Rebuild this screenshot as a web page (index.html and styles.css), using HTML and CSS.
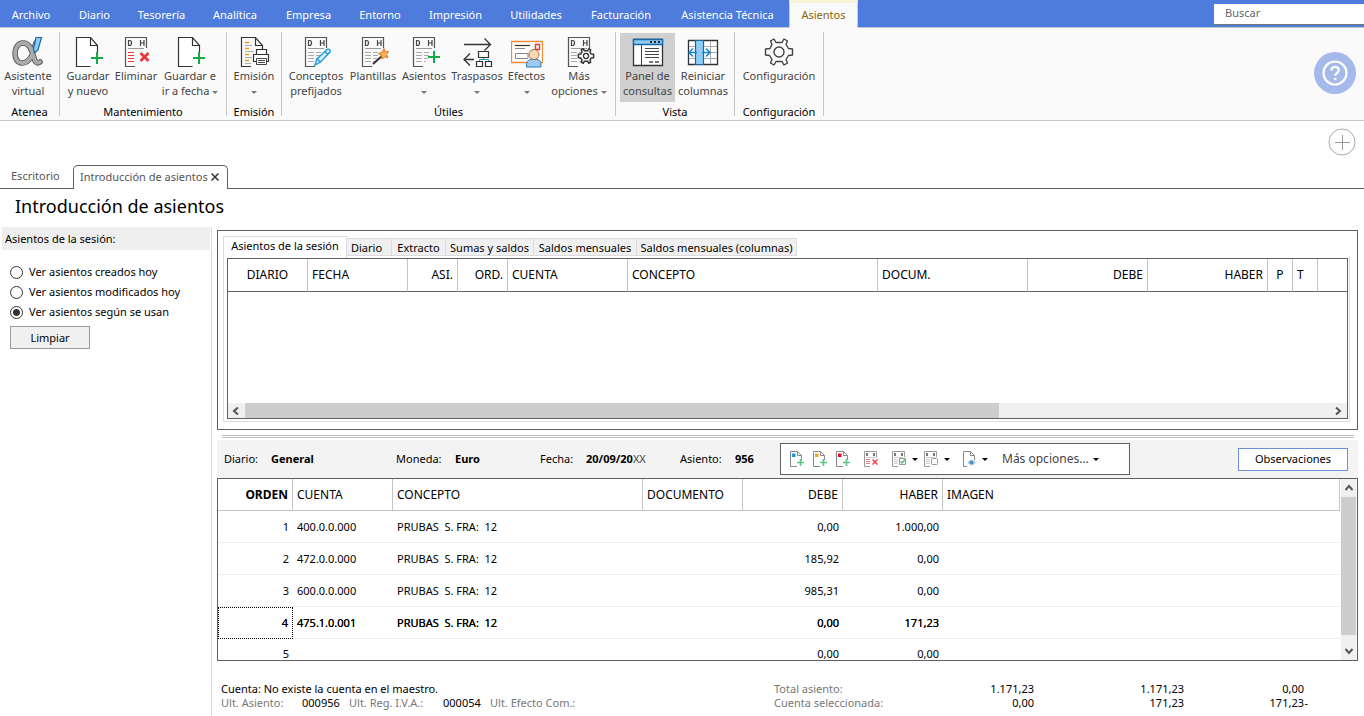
FILE: index.html
```html
<!DOCTYPE html>
<html lang="es">
<head>
<meta charset="utf-8">
<title>Introducción de asientos</title>
<link rel="stylesheet" href="styles.css">
</head>
<body>
<svg class="defs" aria-hidden="true">
  <symbol id="newdoc" viewBox="-1 0 32 32">
    <path d="M17.5 30.500H3.500V1.500H17.500L24.500 9.500V18" fill="#fff" stroke="#333" stroke-width="1.200"/>
    <path d="M17.500 1.500V9.500H24.500" fill="none" stroke="#333" stroke-width="1.200"/>
    <path d="M24 16V28M18 22H30" stroke="#14a84b" stroke-width="2" fill="none"/>
  </symbol>
  <symbol id="dh" viewBox="0 0 32 32">
    <path d="M15 30.500H5.500V1.500H26.500V12" fill="none" stroke="#555" stroke-width="1.200"/>
    <path d="M8.500 4.500V9.500H9.500Q11.500 9.500 11.500 7T9.500 4.500ZM20.500 4V10M24 4V10M20.500 7H24" fill="none" stroke="#444" stroke-width="1.200"/>
    <path d="M8 12.500H24" stroke="#999"/>
  </symbol>
  <symbol id="dhlines" viewBox="0 0 32 32">
    <path d="M8 16.500H14M8 19.500H14M8 22.500H14M8 25.500H14M16 16.500H21M16 19.500H21M16 22.500H20M16 25.500H18" stroke="#aaa"/>
  </symbol>
  <symbol id="cog" viewBox="-16 -16 32 32">
    <path d="M-3 -9.500L-5 -13 -8.500 -11 -7 -7.500-9 -3.500-13.500-3V3L-9.500 3.500-7 7.500-8.500 11-5 13-3 9.500H3L5 13 8.500 11 7 7.500 9.500 3.500 13.500 3V-3L9.500-3.500 7-7.500 8.500-11 5-13 3-9.500Z" fill="#fafafa" stroke="#444" stroke-width="1.400" stroke-linejoin="round"/>
    <circle r="5" fill="#fafafa" stroke="#444" stroke-width="1.400"/>
  </symbol>
  <symbol id="smallcog" viewBox="-16 -16 32 32">
    <path d="M-3 -9.500L-5 -13 -8.500 -11 -7 -7.500-9 -3.500-13.500-3V3L-9.500 3.500-7 7.500-8.500 11-5 13-3 9.500H3L5 13 8.500 11 7 7.500 9.500 3.500 13.500 3V-3L9.500-3.500 7-7.500 8.500-11 5-13 3-9.500Z" fill="#fafafa" stroke="#333" stroke-width="2.600" stroke-linejoin="round"/>
    <circle r="4.500" fill="#fafafa" stroke="#333" stroke-width="2.200"/>
  </symbol>
  <symbol id="minidoc" viewBox="0 0 16 16">
    <path d="M8 15.500H1.500V.5H8.500L12.500 4.500V9M8.500 .5V4.500H12.500" fill="none" stroke="#888"/>
    <path d="M11.500 8V15M8 11.500H15" stroke="#5cc487" stroke-width="1.600"/>
  </symbol>
  <symbol id="minidh" viewBox="0 0 16 16">
    <path d="M6 15.500H.5V.5H12.500V6" fill="none" stroke="#999"/>
    <path d="M3 2V5M10 2V5" stroke="#777" stroke-width="2"/>
    <path d="M2 6.500H11" stroke="#ccc"/>
  </symbol>
</svg>

<nav class="menu">
  <a href="#">Archivo</a><a href="#">Diario</a><a href="#">Tesorería</a><a href="#">Analítica</a><a href="#">Empresa</a><a href="#">Entorno</a><a href="#">Impresión</a><a href="#">Utilidades</a><a href="#">Facturación</a><a href="#">Asistencia Técnica</a><a href="#" class="current">Asientos</a>
  <input class="search" type="text" placeholder="Buscar" aria-label="Buscar">
</nav>

<div class="ribbon">
  <section class="group g-atenea">
    <div class="tools">
      <button class="tool">
        <svg class="ico" viewBox="0 0 32 32"><path d="M24 7C21 16 19 27 10 27 5 27 3 22 3 17S6 7 11 7C18 7 20 15 22 22 23 26 25 28 28 26" fill="none" stroke="#555" stroke-width="5.600" stroke-linecap="round"/><path d="M24 7C21 16 19 27 10 27 5 27 3 22 3 17S6 7 11 7C18 7 20 15 22 22 23 26 25 28 28 26" fill="none" stroke="#aaa" stroke-width="3.800" stroke-linecap="round"/><path d="M24 1.500H29.500L26 14 22.500 17 21.500 13Z" fill="#8fcbf5" stroke="#1468a8" stroke-width="1.200"/></svg>
        <span>Asistente<br>virtual</span></button>
    </div>
    <h2>Atenea</h2>
  </section>
  <section class="group g-mant">
    <div class="tools">
      <button class="tool"><svg class="ico"><use href="#newdoc"/></svg><span>Guardar<br>y nuevo</span></button>
      <button class="tool"><svg class="ico" viewBox="0 0 32 32"><use href="#dh"/><path d="M8 16.500H14M8 19.500H14M8 22.500H14M8 25.500H14" stroke="#ee3338" stroke-width="1.200"/><path d="M20.500 17L28.500 25M28.500 17L20.500 25" stroke="#ee3338" stroke-width="2.600"/></svg><span>Eliminar</span></button>
      <button class="tool"><svg class="ico"><use href="#newdoc"/></svg><span>Guardar e<br>ir a fecha <i class="caret"></i></span></button>
    </div>
    <h2>Mantenimiento</h2>
  </section>
  <section class="group g-emi">
    <div class="tools">
      <button class="tool"><svg class="ico" viewBox="0 0 32 32"><path d="M13 30.500H3.500V1.500H17.500L24.500 9.500V13M17.500 1.500V9.500H24.500" fill="none" stroke="#333" stroke-width="1.200"/><path d="M7 6.500H11M7 12.500H11M7 18.500H11M7 24.500H11" stroke="#f39a1c" stroke-width="1.400"/><path d="M7 9.500H14M7 15.500H16M7 21.500H14M7 27.500H13" stroke="#aaa"/><path d="M18.500 18V13.500H28.500V18M18.500 25.500H15.500V18.500H30.500V25.500H28.500" fill="#fff" stroke="#333" stroke-width="1.200"/><path d="M18.500 22.500H28.500V28.500H18.500ZM20 24.500H27M20 26.500H27" fill="#fff" stroke="#444"/></svg><span>Emisión<br><i class="caret"></i></span></button>
    </div>
    <h2>Emisión</h2>
  </section>
  <section class="group g-util">
    <div class="tools">
      <button class="tool"><svg class="ico" viewBox="0 0 32 32"><use href="#dh"/><use href="#dhlines"/><path d="M15 29L17 23 27 13.500C29 12.500 31 14 30 16L20.500 26ZM17 23L20.500 26M25 15.500L28 18.500" fill="#d9effb" stroke="#1d9bdc" stroke-width="1.400"/></svg><span>Conceptos<br>prefijados</span></button>
      <button class="tool"><svg class="ico" viewBox="0 0 32 32"><use href="#dh"/><use href="#dhlines"/><path d="M16 28L25 20" stroke="#333" stroke-width="2"/><path d="M27 12.500L28 16 31.500 15.500 29.500 18.500 31 21.500 27.500 21 25 23 24.500 19.500 21.500 17.500 25 16.500Z" fill="#f9b24a" stroke="#e2762a"/></svg><span>Plantillas</span></button>
      <button class="tool"><svg class="ico" viewBox="0 0 32 32"><use href="#dh"/><use href="#dhlines"/><path d="M26 15V27M20 21H32" stroke="#14a84b" stroke-width="2"/></svg><span>Asientos<br><i class="caret"></i></span></button>
      <button class="tool"><svg class="ico" viewBox="0 0 32 32"><path d="M3 8.500H29M23.500 2.500L29.500 8.500 23.500 14.500M13 23.500H3M9 17.500L3 23.500 9 29.500" fill="none" stroke="#333" stroke-width="1.300"/><path d="M17.500 15.500H27.500V21.500H17.500ZM15.500 25.500H21.500V30.500H15.500ZM24.500 25.500H30.500V30.500H24.500Z" fill="#fafafa" stroke="#333" stroke-width="1.200"/><path d="M22.500 22V23.500M18.500 25V23.500H27.500V25" fill="none" stroke="#1d9bdc"/></svg><span>Traspasos<br><i class="caret"></i></span></button>
      <button class="tool"><svg class="ico" viewBox="0 0 32 32"><path d="M.5 5.500H31.500V26.500H.5Z" fill="#fff" stroke="#ee8a3a" stroke-width="1.300"/><path d="M4 9.500H19" stroke="#333" stroke-width="1.200"/><path d="M4 12.500H14" stroke="#888"/><path d="M4.500 17.500H17V22.500H4.500Z" fill="none" stroke="#888"/><path d="M24.500 8.500H28.500V13.500H24.500Z" fill="#fff" stroke="#e33" stroke-width="1.400"/><path d="M15.500 31V28Q16 23 23 23T30 28V31Z" fill="#9fcaf0" stroke="#2f7fbf"/><circle cx="23" cy="18.500" r="5" fill="#f9d8b4" stroke="#9a6a4a"/></svg><span>Efectos<br><i class="caret"></i></span></button>
      <button class="tool"><svg class="ico" viewBox="0 0 32 32"><use href="#dh"/><use href="#dhlines"/><use href="#smallcog" x="14" y="11" width="18" height="18"/></svg><span>Más<br>opciones <i class="caret"></i></span></button>
    </div>
    <h2>Útiles</h2>
  </section>
  <section class="group g-vista">
    <div class="tools">
      <button class="tool pressed"><svg class="ico" viewBox="0 0 32 32"><path d="M1.500 3.500H30.500V29.500H1.500Z" fill="#fff" stroke="#333" stroke-width="1.300"/><path d="M1.500 3.500H30.500V8.500H1.500Z" fill="#8fcbf5" stroke="#1468a8" stroke-width="1.300"/><path d="M18 6H20M22 6H24M26 6H28" stroke="#222" stroke-width="2"/><path d="M9.500 9V29M13 12.500H27M13 15.500H27M13 18.500H27M13 21.500H27" stroke="#444"/><path d="M17 26H21M23 26H27" stroke="#777" stroke-width="2"/></svg><span>Panel de<br>consultas</span></button>
      <button class="tool"><svg class="ico" viewBox="0 0 32 32"><path d="M1.500 4.500H30.500V28.500H1.500Z" fill="#fff" stroke="#333" stroke-width="1.300"/><path d="M2 10.500H30M2 16.500H30M2 22.500H30M23.500 5V28" stroke="#aaa"/><path d="M8.500 4.500H16.500V28.500H8.500Z" fill="#8fcbf5" stroke="#1468a8" stroke-width="1.200"/><path d="M10 16.500H2.500M6 12.500L2 16.500 6 20.500M15 16.500H22.500M19 12.500L23 16.500 19 20.500" fill="none" stroke="#1487cc" stroke-width="1.500"/></svg><span>Reiniciar<br>columnas</span></button>
    </div>
    <h2>Vista</h2>
  </section>
  <section class="group g-conf">
    <div class="tools">
      <button class="tool"><svg class="ico"><use href="#cog"/></svg><span>Configuración</span></button>
    </div>
    <h2>Configuración</h2>
  </section>
  <button class="help" aria-label="Ayuda"><svg viewBox="0 0 42 42"><circle cx="21" cy="21" r="21" fill="#a5baeb"/><circle cx="21" cy="21" r="11.500" fill="none" stroke="#fff" stroke-width="2.200"/><path d="M17.500 18.500C17.500 13.500 24.800 13.800 24.800 18 24.800 20.800 21.200 20.800 21.200 23.800" fill="none" stroke="#fff" stroke-width="2.200"/><circle cx="21.200" cy="27" r="1.300" fill="#fff"/></svg></button>
</div>

<div class="docbar">
  <button class="add" aria-label="Añadir"><svg viewBox="0 0 28 28"><circle cx="14" cy="14" r="13" fill="none" stroke="#aaa"/><path d="M14.500 7V22M7 14.500H22" stroke="#999"/></svg></button>
  <div class="doctabs">
    <a href="#" class="doctab">Escritorio</a>
    <span class="doctab open"><a href="#">Introducción de asientos</a><button class="close" aria-label="Cerrar"><svg viewBox="0 0 8 8"><path d="M.5 .5L7.500 7.500M7.500 .5L.5 7.500" stroke="#333" stroke-width="1.500"/></svg></button></span>
    <span class="rule"></span>
  </div>
</div>

<h1>Introducción de asientos</h1>

<div class="body">
  <aside class="side">
    <h3>Asientos de la sesión:</h3>
    <div class="choices">
      <label><input type="radio" name="ver">Ver asientos creados hoy</label>
      <label><input type="radio" name="ver">Ver asientos modificados hoy</label>
      <label><input type="radio" name="ver" checked>Ver asientos según se usan</label>
      <button class="clear">Limpiar</button>
    </div>
  </aside>

  <main class="work">
    <section class="query">
      <div class="qtabs">
        <button class="active">Asientos de la sesión</button><button class="near">Diario</button><button>Extracto</button><button>Sumas y saldos</button><button>Saldos mensuales</button><button>Saldos mensuales (columnas)</button>
      </div>
      <div class="qframe">
        <div class="qgrid">
          <table class="grid">
            <colgroup><col class="w80"><col class="w100"><col class="w50"><col class="w50"><col class="w120"><col class="w250"><col class="w150"><col class="w120"><col class="w120"><col class="w25"><col class="w25"><col></colgroup>
            <thead><tr><th class="mid">DIARIO</th><th>FECHA</th><th class="num">ASI.</th><th class="num">ORD.</th><th>CUENTA</th><th>CONCEPTO</th><th>DOCUM.</th><th class="num">DEBE</th><th class="num">HABER</th><th class="mid">P</th><th>T</th><th></th></tr></thead>
          </table>
          <div class="hscroll"><svg viewBox="0 0 8 8"><path d="M6 .5L2 4 6 7.500" fill="none" stroke="#555" stroke-width="2"/></svg><i class="track"><i class="thumb"></i></i><svg viewBox="0 0 8 8"><path d="M2 .5L6 4 2 7.500" fill="none" stroke="#555" stroke-width="2"/></svg></div>
        </div>
      </div>
    </section>

    <div class="splitter"></div>

    <section class="entry">
      <dl class="facts">
        <dt>Diario:</dt><dd>General</dd>
        <dt>Moneda:</dt><dd>Euro</dd>
        <dt>Fecha:</dt><dd>20/09/20<span>XX</span></dd>
        <dt>Asiento:</dt><dd>956</dd>
      </dl>
      <div class="minibar">
        <button aria-label="Nuevo"><svg viewBox="0 0 16 16"><use href="#minidoc"/><path d="M3 2.500H6.500V6H3Z" fill="#149be0"/></svg></button>
        <button aria-label="Nuevo intermedio"><svg viewBox="0 0 16 16"><use href="#minidoc"/><path d="M3 2.500H6.500V6H3Z" fill="#f5a623"/></svg></button>
        <button aria-label="Nuevo final"><svg viewBox="0 0 16 16"><use href="#minidoc"/><path d="M3 2.500H6.500V6H3Z" fill="#e0102a"/></svg></button>
        <button class="del" aria-label="Eliminar"><svg viewBox="0 0 16 16"><use href="#minidh"/><path d="M2 8.500H6M2 10.500H6M2 12.500H6" stroke="#f08080"/><path d="M8.500 8.500L13.500 13.500M13.500 8.500L8.500 13.500" stroke="#f04545" stroke-width="1.500"/></svg></button>
        <button class="drop" aria-label="Marcar"><svg viewBox="0 0 16 16"><use href="#minidh"/><path d="M2 8.500H6M2 10.500H6M2 12.500H6" stroke="#ccc"/><path d="M7.500 7.500H13.500V13.500H7.500Z" fill="#fff" stroke="#999"/><path d="M8.500 10.500L10 12 13 8.500" fill="none" stroke="#4cbb7a" stroke-width="1.400"/></svg><i class="caret"></i></button>
        <button class="drop" aria-label="Desmarcar"><svg viewBox="0 0 16 16"><use href="#minidh"/><path d="M2 8.500H6M2 10.500H6M2 12.500H6" stroke="#ccc"/><rect x="7.500" y="7.500" width="6" height="6" rx="1" fill="#fff" stroke="#999"/></svg><i class="caret"></i></button>
        <button class="drop view" aria-label="Ver documento"><svg viewBox="0 0 16 16"><path d="M5 15.500H1.500V.5H8.500L12.500 4.500V9M8.500 .5V4.500H12.500" fill="none" stroke="#888"/><path d="M5 11.500Q9.500 6 14 11.500 9.500 17 5 11.500Z" fill="#b4d2ea"/><circle cx="9.500" cy="11.500" r="2" fill="#4e8fc4"/></svg><i class="caret"></i></button>
        <button class="more">Más opciones...<i class="caret"></i></button>
      </div>
      <button class="notes">Observaciones</button>
    </section>

    <section class="lines">
      <div class="linesview">
        <table class="grid rows">
          <colgroup><col class="w75"><col class="w100"><col class="w250"><col class="w100"><col class="w100"><col class="w100"><col></colgroup>
          <thead><tr><th class="num strong">ORDEN</th><th>CUENTA</th><th>CONCEPTO</th><th>DOCUMENTO</th><th class="num">DEBE</th><th class="num">HABER</th><th>IMAGEN</th></tr></thead>
          <tbody>
            <tr><td class="num">1</td><td>400.0.0.000</td><td>PRUBAS  S. FRA:  12</td><td></td><td class="num">0,00</td><td class="num">1.000,00</td><td></td></tr>
            <tr><td class="num">2</td><td>472.0.0.000</td><td>PRUBAS  S. FRA:  12</td><td></td><td class="num">185,92</td><td class="num">0,00</td><td></td></tr>
            <tr><td class="num">3</td><td>600.0.0.000</td><td>PRUBAS  S. FRA:  12</td><td></td><td class="num">985,31</td><td class="num">0,00</td><td></td></tr>
            <tr class="selected"><td class="num focus">4</td><td>475.1.0.001</td><td>PRUBAS  S. FRA:  12</td><td></td><td class="num">0,00</td><td class="num">171,23</td><td></td></tr>
            <tr class="final"><td class="num">5</td><td></td><td></td><td></td><td class="num">0,00</td><td class="num">0,00</td><td></td></tr>
          </tbody>
        </table>
      </div>
      <div class="vscroll"><svg viewBox="0 0 8 8"><path d="M.5 6L4 2 7.500 6" fill="none" stroke="#555" stroke-width="2"/></svg><i class="track"><i class="thumb"></i></i><svg viewBox="0 0 8 8"><path d="M.5 2L4 6 7.500 2" fill="none" stroke="#555" stroke-width="2"/></svg></div>
    </section>

    <footer class="status">
      <div>
        <p>Cuenta: No existe la cuenta en el maestro.</p>
        <p class="last"><span>Ult. Asiento:</span><b>000956</b><span>Ult. Reg. I.V.A.:</span><b>000054</b><span>Ult. Efecto Com.:</span></p>
      </div>
      <table class="totals">
        <tr><th>Total asiento:</th><td>1.171,23</td><td>1.171,23</td><td>0,00</td><td class="sign"></td></tr>
        <tr><th>Cuenta seleccionada:</th><td>0,00</td><td>171,23</td><td>171,23</td><td class="sign">-</td></tr>
      </table>
    </footer>
  </main>
</div>
</body>
</html>
```
FILE: styles.css
```css
* { box-sizing: border-box; }
body {
  margin: 0;
  height: 100vh;
  display: flex;
  flex-direction: column;
  background: #fff;
  color: #000;
  font: 11px/14px "Noto Sans", "Open Sans", sans-serif;
  overflow: hidden;
}
button, input { font: inherit; color: inherit; }
button { padding: 0; border: 0; background: none; }
a { color: inherit; text-decoration: none; }
h1, h2, h3, p, dl, dd { margin: 0; font-weight: 400; }
svg { display: block; flex: none; }
.defs { position: absolute; width: 0; height: 0; }

.menu {
  flex: none;
  display: grid;
  grid-template-columns: 64px 61px 73px 74px 73px 70px 81px 80px 90px 123px 69px 1fr 150px;
  height: 28px;
  background: #4d7cdc;
  border-bottom: 1px solid #c4c8d0;
  color: #fff;
  line-height: 30px;
  text-align: center;
  white-space: nowrap;
}
.menu a:first-child { padding-right: 2px; }
.menu .current {
  height: 28px;
  background: #fafafa;
  border: 1px solid #d0cdc0;
  border-top: 3px solid #fbf3d6;
  border-bottom: 0;
  color: #8a6508;
  line-height: 24px;
}
.search {
  grid-column: 13;
  height: 21px;
  margin-top: 4px;
  padding: 0 11px 3px;
  border: 0;
  border-bottom: 1px solid #777;
  border-radius: 0;
  background: #fff;
  min-width: 0;
}
.search::placeholder { color: #666; opacity: 1; }

.ribbon {
  flex: none;
  display: flex;
  height: 93px;
  background: #fafafa;
  border-bottom: 1px solid #c6c6c6;
}
.group {
  flex: none;
  padding: 5px 1px 0 0;
  background: linear-gradient(#c8c8c8, #c8c8c8) right 4px / 1px 84px no-repeat;
}
.group h2 { margin-top: 3px; font-size: 11px; line-height: 14px; text-align: center; }
.tools { display: grid; height: 69px; }
.g-atenea { width: 60px; }
.g-atenea .tools { grid-template-columns: 56px; }
.g-mant { width: 167px; }
.g-mant .tools { grid-template-columns: 48px 48px 60px; padding-left: 4px; }
.g-emi { width: 55px; }
.g-util { width: 334px; }
.g-util .tools { grid-template-columns: 58px 56px 46px 60px 39px 66px; padding-left: 5px; }
.g-vista { width: 119px; }
.g-vista .tools { grid-template-columns: 55px 54px; column-gap: 1px; padding-left: 4px; }
.g-conf { width: 89px; }
.tool {
  display: flex;
  flex-direction: column;
  align-items: center;
  padding-top: 3px;
  color: #444;
  line-height: 15px;
  white-space: nowrap;
}
.tool.pressed { background: #d0d0d0; }
.ico { width: 32px; height: 32px; }
.caret {
  display: inline-block;
  vertical-align: middle;
  border: 3px solid transparent;
  border-top-color: currentColor;
  border-bottom: 0;
}
.tool .caret { color: #777; }
.help { width: 42px; height: 42px; margin: 24px 8px 0 auto; }

.docbar {
  flex: none;
  display: flex;
  flex-direction: column;
  height: 68px;
  padding-top: 7px;
}
.add { width: 28px; height: 28px; margin: 0 8px 0 auto; }
.doctabs { display: flex; margin-top: 9px; height: 24px; color: #555; line-height: 21px; }
.doctab { width: 73px; padding-left: 11px; border-bottom: 1px solid #606060; white-space: nowrap; }
.doctab.open {
  display: flex;
  justify-content: space-between;
  align-items: flex-start;
  width: 155px;
  padding: 0 8px 0 6px;
  border: 1px solid #606060;
  border-bottom: 0;
  border-radius: 5px 5px 0 0;
}
.close, .close svg { width: 8px; height: 8px; }
.close { margin-top: 7px; }
.rule { flex: 1; border-bottom: 1px solid #606060; }

h1 { flex: none; padding: 5px 15px 8px; font-size: 18px; line-height: 25px; }

.body { flex: 1; min-height: 0; display: flex; }
.side { flex: none; width: 212px; border-right: 1px solid #d8d8d8; }
.side h3 { margin: 0 1px 0 2px; padding-left: 3px; background: #eee; font-size: 11px; line-height: 23px; }
.choices { padding: 12px 10px; display: flex; flex-direction: column; align-items: flex-start; }
.choices label { display: flex; align-items: center; gap: 6px; height: 20px; }
.choices input {
  appearance: none;
  width: 13px;
  height: 13px;
  margin: 0;
  border: 1px solid #333;
  border-radius: 50%;
  background: #fff;
}
.choices input:checked { background: radial-gradient(circle, #333 0 3px, #fff 4px); }
.clear { width: 80px; height: 23px; margin-top: 4px; border: 1px solid #999; background: #f0f0f0; }

.work { flex: 1; min-width: 0; display: flex; flex-direction: column; padding: 3px 6px 0 5px; }
.query {
  flex: none;
  display: flex;
  flex-direction: column;
  height: 200px;
  padding: 5px 7px 7px 5px;
  border: 1px solid #606060;
}
.qtabs {
  display: grid;
  grid-template-columns: 124px 45px 54px 88px 103px 160px;
  align-items: end;
  height: 20px;
}
.qtabs button {
  height: 18px;
  border: 1px solid #dcdcdc;
  border-left: 0;
  background: #f0f0f0;
  line-height: 18px;
  white-space: nowrap;
}
.qtabs .near { padding-left: 4px; text-align: left; }
.qtabs .active {
  height: 22px;
  margin-bottom: -2px;
  padding-bottom: 3px;
  border-left: 1px solid #dcdcdc;
  border-bottom: 0;
  background: #fff;
}
.qframe { flex: 1; display: flex; padding: 2px 1px 2px 3px; border: 1px solid #dcdcdc; border-top: 0; }
.qgrid { flex: 1; min-width: 0; display: flex; flex-direction: column; justify-content: space-between; border: 1px solid #606060; }

.grid { width: 100%; table-layout: fixed; border-collapse: separate; border-spacing: 0; font-size: 12px; line-height: 16px; }
.grid th {
  height: 32px;
  padding: 0 4px;
  border-right: 1px solid #c4c4c4;
  border-bottom: 1px solid #c4c4c4;
  font-weight: 400;
  text-align: left;
}
.qgrid th { height: 33px; border-bottom-color: #606060; }
.qgrid th:last-child { border-right: 0; }
.grid .num { text-align: right; }
.grid .mid { text-align: center; }
.grid .strong { font-weight: 700; }
.w25 { width: 25px; }
.w50 { width: 50px; }
.w75 { width: 75px; }
.w80 { width: 80px; }
.w100 { width: 100px; }
.w120 { width: 120px; }
.w150 { width: 150px; }
.w250 { width: 250px; }
.hscroll { display: flex; align-items: center; height: 15px; background: #f0f0f0; }
.hscroll svg { width: 8px; height: 8px; margin: 0 5px 0 4px; }
.track { flex: 1; display: block; align-self: stretch; }
.thumb { display: block; background: #cdcdcd; }
.hscroll .thumb { width: 69.5%; height: 100%; }

.splitter { flex: none; height: 3px; margin: 5px 4px 2px 5px; border: 1px solid #c0c0c0; border-width: 1px 0; }

.entry { flex: none; display: flex; align-items: center; height: 38px; padding-right: 10px; background: #f3f3f3; }
.facts { display: grid; grid-template-columns: 47px 125px 59px 85px 46px 94px 55px 45px; padding-left: 7px; white-space: nowrap; }
.facts dd { font-weight: 700; }
.facts dd span { font-weight: 400; color: #444; }
.minibar {
  flex: none;
  display: flex;
  align-items: center;
  width: 350px;
  height: 32px;
  padding: 0 8px;
  border: 1px solid #606060;
  background: #fff;
}
.minibar button { display: flex; align-items: center; margin-right: 7px; }
.minibar svg { width: 16px; height: 16px; }
.minibar .del { margin: 0 12px 0 6px; }
.minibar .drop { gap: 4px; margin-right: 6px; }
.minibar .view { gap: 4px; margin: 0 14px 0 6px; }
.minibar .more { gap: 4px; color: #444; font-size: 12px; }
.minibar .caret { color: #000; }
.notes { width: 110px; height: 23px; margin-left: auto; border: 1px solid #6c90dc; background: #fff; }

.lines { flex: 1; min-height: 0; display: flex; border: 1px solid #606060; }
.linesview { flex: 1; min-width: 0; overflow: hidden; }
.rows td { height: 32px; padding: 0 4px; border-bottom: 1px solid #eee; font-size: 11px; white-space: pre; }
.rows .final td { height: 22px; padding-top: 7px; border-bottom: 0; line-height: 14px; }
.rows .selected { text-shadow: 0 0 0 #000; }
.rows .focus { border: 1px dotted #000; }
.vscroll { flex: none; display: flex; flex-direction: column; align-items: center; width: 16px; margin-left: 1px; border-right: 1px solid #f8f8f8; background: #f0f0f0; }
.vscroll svg { width: 8px; height: 8px; margin: 5px 0; }
.vscroll .thumb { height: 100%; }
.vscroll .track { margin-bottom: 7px; }

.status { flex: none; display: flex; justify-content: space-between; margin-top: 21px; padding: 0 50px 6px 4px; white-space: nowrap; }
.last { display: grid; grid-template-columns: 81px 47px 94px 47px auto; color: #777; }
.last b { font-weight: 400; color: #000; }
.totals { border-spacing: 0; line-height: 14px; }
.totals th { width: 120px; padding: 0; color: #777; font-weight: 400; text-align: left; }
.totals td { width: 150px; padding: 0; text-align: right; }
.totals td:nth-child(2) { width: 140px; }
.totals td:nth-child(4) { width: 120px; }
.totals .sign { width: 4px; }
```
